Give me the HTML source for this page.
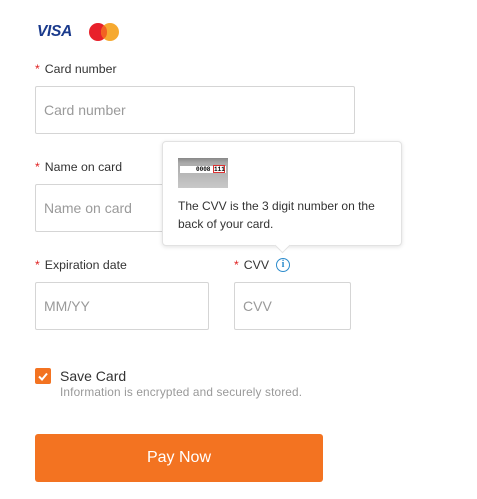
<!DOCTYPE html>
<html><head><style>
body{margin:0;background:#fff;font-family:"Liberation Sans",Arial,sans-serif;width:477px;height:499px;position:relative;overflow:hidden}
.a{position:absolute}
.lbl{font-size:12.3px;color:#333}
.lbl b{color:#e02020;font-weight:normal;margin-right:5px}
.inp{position:absolute;border:1px solid #d5d5d5;border-radius:2px;box-sizing:border-box;font-size:14px;color:#9a9a9a;padding-left:8px;display:flex;align-items:center}
</style></head><body>
<div class="a" style="left:37px;top:23px;font:italic bold 15.5px 'Liberation Sans';color:#1a3a8c;letter-spacing:-0.3px">VISA</div>
<div class="a" style="left:89px;top:23px;width:18px;height:18px;border-radius:50%;background:#e8202a"></div>
<div class="a" style="left:101px;top:23px;width:18px;height:18px;border-radius:50%;background:#f5a01a;opacity:.9"></div>
<div class="a" style="left:101px;top:26px;width:6px;height:12px;background:#f26122;border-radius:50%"></div>

<div class="a lbl" style="left:35px;top:62px"><b>*</b>Card number</div>
<div class="inp" style="left:35px;top:86px;width:320px;height:48px">Card number</div>
<div class="a lbl" style="left:35px;top:160px"><b>*</b>Name on card</div>
<div class="inp" style="left:35px;top:184px;width:320px;height:48px">Name on card</div>
<div class="a lbl" style="left:35px;top:258px"><b>*</b>Expiration date</div>
<div class="inp" style="left:35px;top:282px;width:174px;height:48px">MM/YY</div>
<div class="a lbl" style="left:234px;top:258px"><b>*</b>CVV</div>
<div class="a" style="left:276px;top:258px;width:12px;height:12px;border:1.5px solid #2d8ccc;border-radius:50%;color:#2d8ccc;font:bold 10px 'Liberation Serif';text-align:center;line-height:12px">i</div>
<div class="inp" style="left:234px;top:282px;width:117px;height:48px">CVV</div>

<div class="a" style="left:162px;top:141px;width:240px;height:105px;background:#fff;border:1px solid #e2e2e2;border-radius:4px;box-shadow:0 1px 4px rgba(0,0,0,.12);box-sizing:border-box"></div>
<div class="a" style="left:277px;top:240px;width:10px;height:10px;background:#fff;transform:rotate(45deg);border-right:1px solid #e2e2e2;border-bottom:1px solid #e2e2e2"></div>
<div class="a" style="left:178px;top:158px;width:50px;height:30px;background:linear-gradient(#888 0,#aaa 5px,#c8c8c8 100%)">
<div class="a" style="left:2px;top:8px;width:46px;height:7px;background:#fff"></div>
<div class="a" style="left:18px;top:8px;font:bold 6px 'Liberation Mono';color:#000">0008</div>
<div class="a" style="left:35px;top:7px;width:12px;height:8px;border:1px solid #d33;font:bold 6px 'Liberation Mono';color:#000;box-sizing:border-box;line-height:7px">111</div>
</div>
<div class="a" style="left:178px;top:197px;width:215px;font-size:12px;color:#333;line-height:18px">The CVV is the 3 digit number on the back of your card.</div>

<div class="a" style="left:35px;top:368px;width:16px;height:16px;background:#f37321;border-radius:2px">
<svg width="16" height="16"><path d="M4 8.5l3 3 5-6" stroke="#fff" stroke-width="2" fill="none"/></svg></div>
<div class="a" style="left:60px;top:368px;font-size:14px;color:#333">Save Card</div>
<div class="a" style="left:60px;top:385px;font-size:11.8px;color:#999;letter-spacing:0.15px">Information is encrypted and securely stored.</div>
<div class="a" style="left:35px;top:434px;width:288px;height:48px;background:#f37321;border-radius:3px;color:#fff;font-size:16px;display:flex;align-items:center;justify-content:center">Pay Now</div>
</body></html>
